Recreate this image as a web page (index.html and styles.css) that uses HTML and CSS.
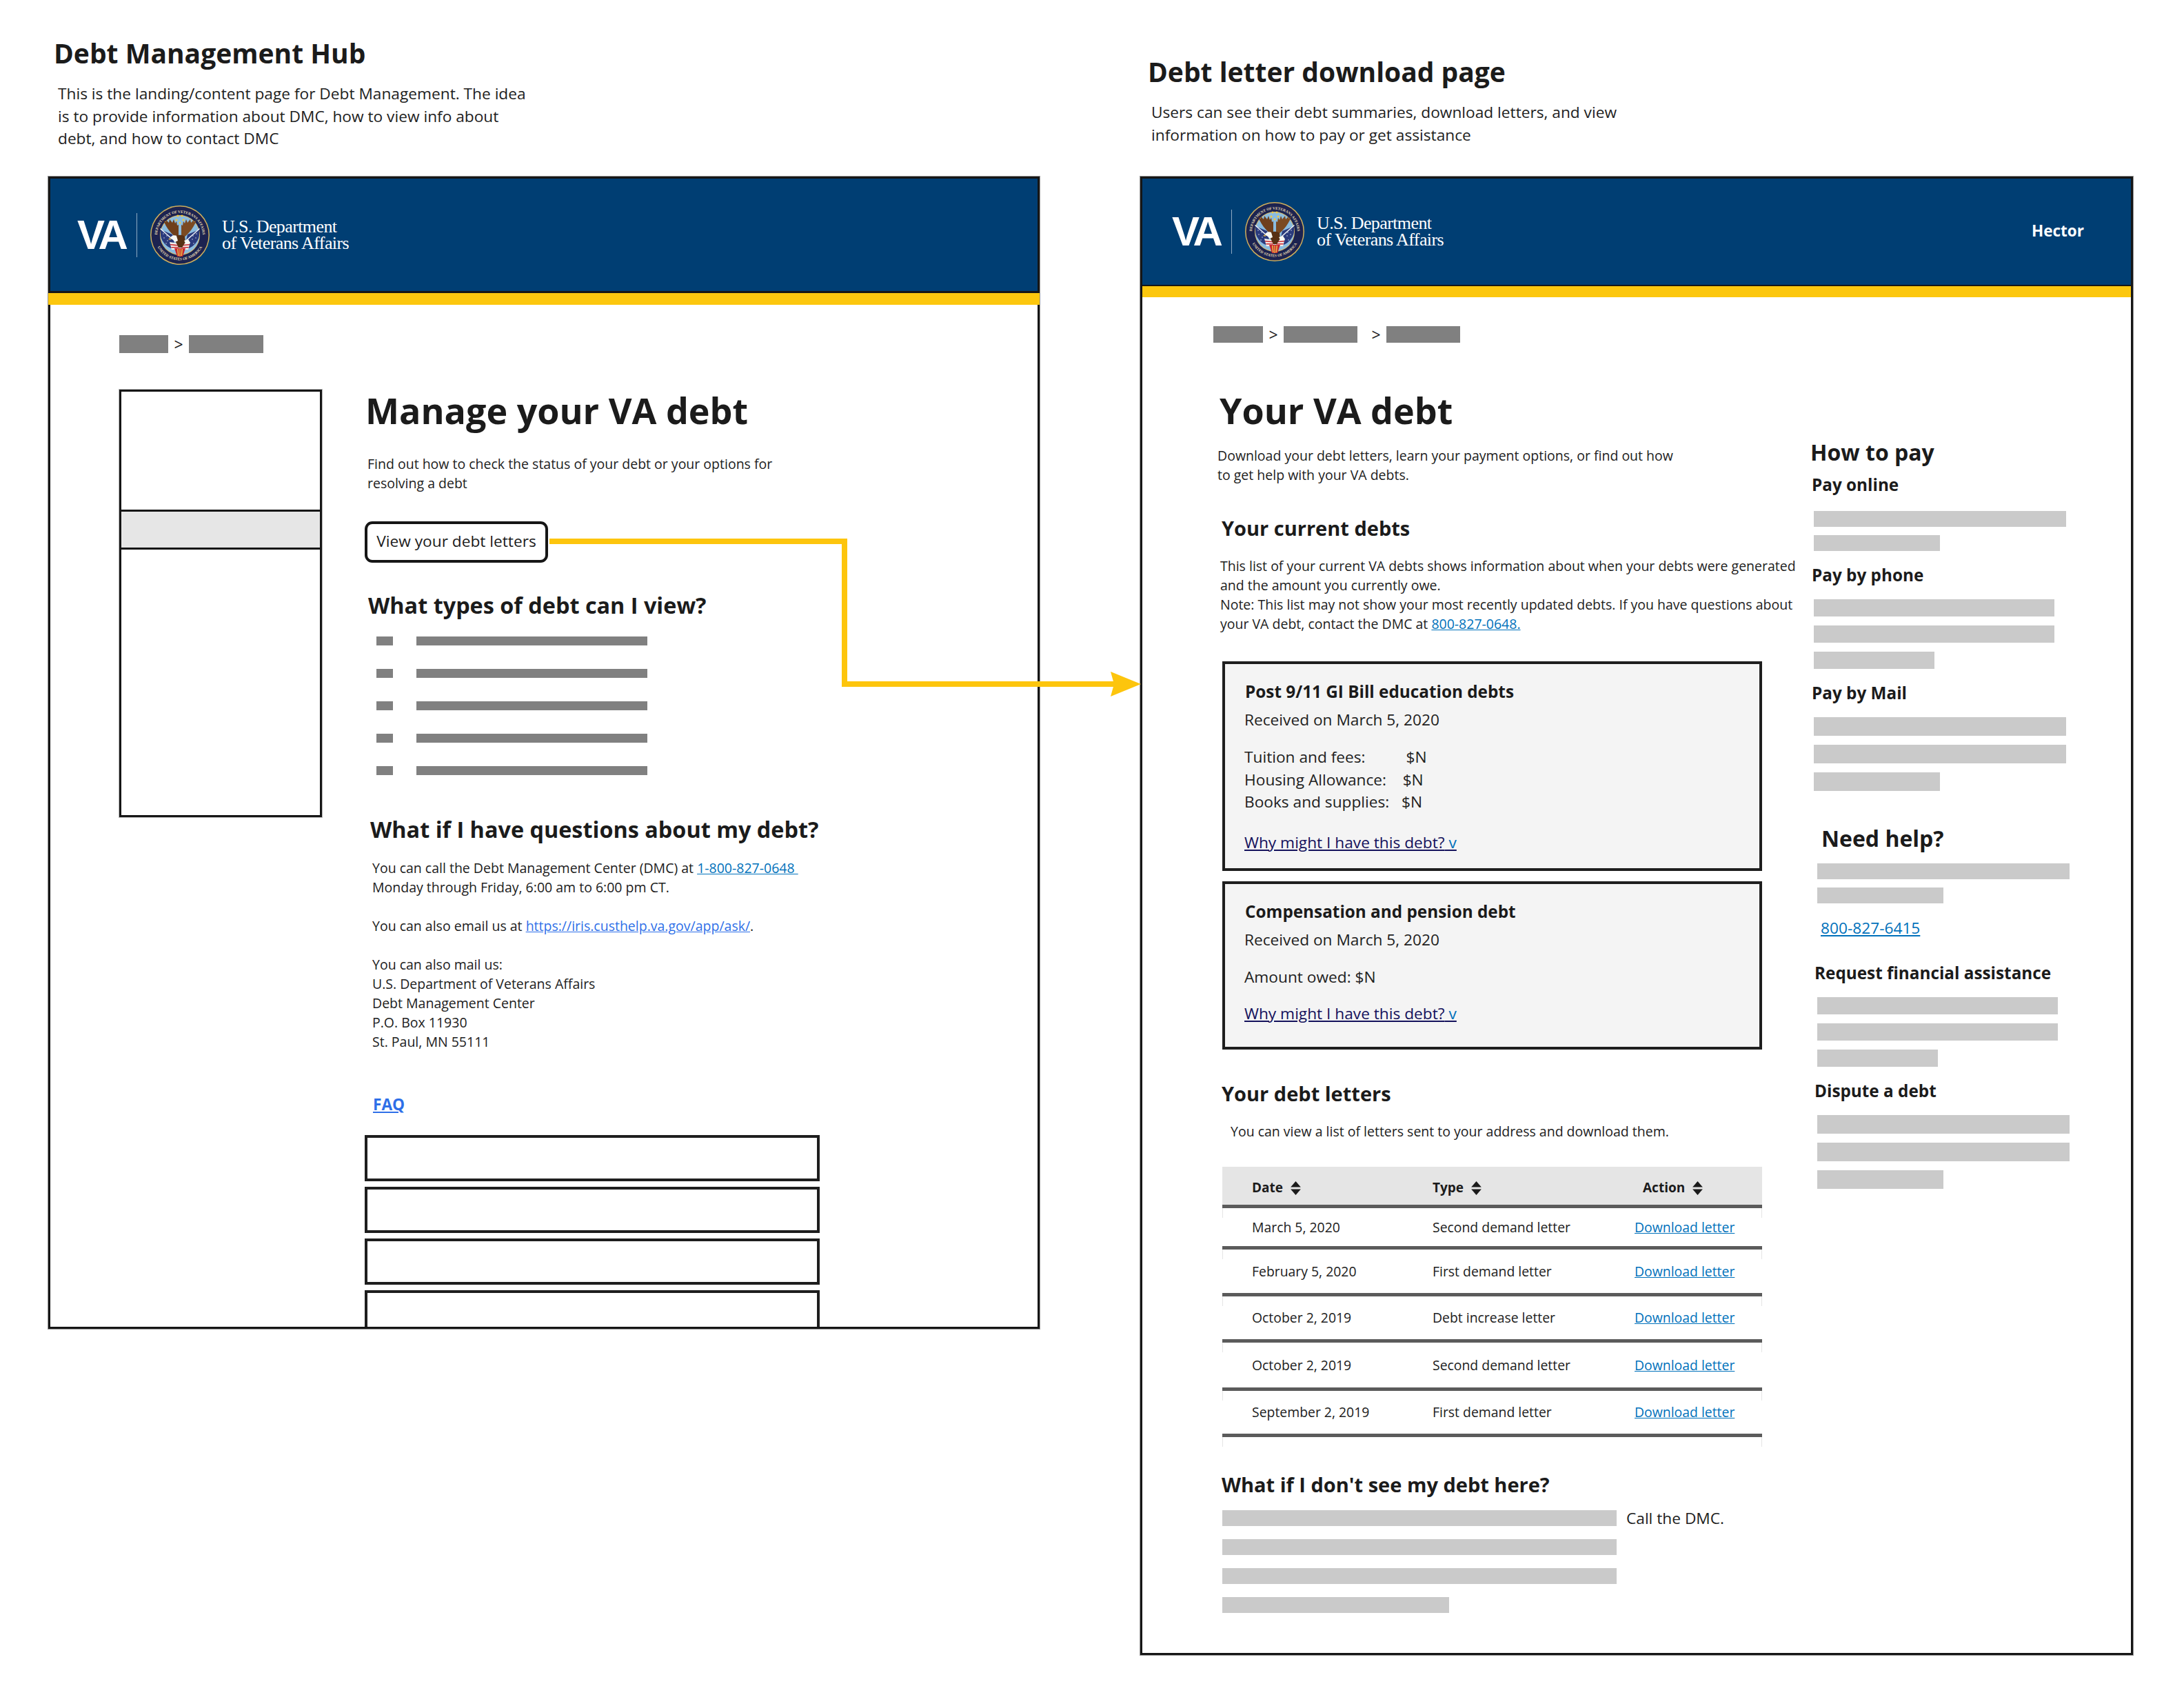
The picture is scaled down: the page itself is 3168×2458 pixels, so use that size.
FILE: index.html
```html
<!DOCTYPE html>
<html lang="en">

<head>
    <meta charset="UTF-8">
    <meta name="viewport" content="width=device-width, initial-scale=1.0">
    <title>Debt Management wireframes</title>
    <link rel="stylesheet" href="styles.css">
</head>

<body>
    <svg class="svg-defs" width="0" height="0" aria-hidden="true">
        <symbol id="sort-arrows" viewBox="0 0 14 19">
            <path d="M7 0l7 8H0zM7 19L0 11h14z"/>
        </symbol>
        <symbol id="seal-art" viewBox="0 0 86 86">
            <circle cx="43" cy="43" r="43" fill="#cfae5c"/>
            <circle cx="43" cy="43" r="41.5" fill="#1c2350"/>
            <circle cx="43" cy="43" r="29" fill="#d8bd72"/>
            <circle cx="43" cy="43" r="28" fill="#8abce0"/>
            <path d="M15 35l17 7 4 18-6 2c-7-3-13-9-15-18z" fill="#2a3a7c"/>
            <path d="M71 35l-17 7-4 18 6 2c7-3 13-9 15-18z" fill="#2a3a7c"/>
            <path d="M71 33L52 50l1 1 19-17z" fill="#eef2f6"/>
            <path d="M15 33l17 15-1 1-17-15z" fill="#eef2f6"/>
            <g fill="#e6e8f2">
                <circle cx="19" cy="41" r=".7"/><circle cx="24" cy="44" r=".7"/><circle cx="20" cy="47" r=".7"/><circle cx="25" cy="51" r=".7"/><circle cx="23" cy="55" r=".7"/>
                <circle cx="67" cy="41" r=".7"/><circle cx="62" cy="44" r=".7"/><circle cx="66" cy="47" r=".7"/><circle cx="61" cy="49" r=".7"/><circle cx="63" cy="55" r=".7"/>
            </g>
            <path d="M28 53l13 2 2 9H31zM58 53l-13 2-2 9h12z" fill="#f3eeea"/>
            <path d="M29 56l11 1v1.600l-11-1zM30 60l11 0v1.600H31zM57 56l-11 1v1.600l11-1zM56 60H45v1.600h10z" fill="#c8262f"/>
            <path d="M35 62h16l-4 12h-8z" fill="#c8262f"/>
            <path d="M39 63h1.500l1 10h-1.500zM45.500 63H47l-1 10h-1.500zM42.400 63h1.200v11h-1.200z" fill="#e6c04c"/>
            <g fill="#f2c93e">
                <circle cx="40" cy="15" r="1.500"/><circle cx="46" cy="15" r="1.500"/><circle cx="38" cy="21" r="1.500"/><circle cx="48" cy="21" r="1.500"/><circle cx="43" cy="25" r="1.500"/>
            </g>
            <path d="M41 49C36 46 24 36 19 21l4 3 0-3 4 4 1-5 4 5 2-5 2 6 2-3 1 6 2-1 0 21z" fill="#6f3f1c"/>
            <path d="M45 49c5-3 17-13 22-28l-4 3 0-3-4 4-1-5-4 5-2-5-2 6-2-3-1 6-2-1 0 21z" fill="#7b4a22"/>
            <path d="M36 45c3-3 11-3 14 0l1 8-5 8h-5l-4-8z" fill="#573014"/>
            <path d="M29 47c1-3 6-5 9-3l2 7-4 2-3-3z" fill="#f8f8f4"/>
            <path d="M29 47l-3 2 4 1z" fill="#e6b93c"/>
            <path d="M49 51l6-2 3 5-6 2z" fill="#f8f8f4"/>
        </symbol>
    </svg>

    <div class="canvas">
        <section class="board board-hub">
            <div class="board-intro">
                <h2 class="board-title">Debt Management Hub</h2>
                <p class="board-note">This is the landing/content page for Debt Management. The idea<br>is to provide information about DMC, how to view info about<br>debt, and how to contact DMC</p>
            </div>

            <div class="frame">
                <header class="site-header">
                    <div class="va-logo">
                        <span class="va-mark">VA</span>
                        <span class="va-rule"></span>
                        <svg class="va-seal" viewBox="0 0 86 86">
                            <use href="#seal-art" width="86" height="86"/>
                            <path id="hub-seal-top" d="M12 55A33 33 0 1 1 74 55" fill="none"/>
                            <path id="hub-seal-bottom" d="M9 57A37 37 0 0 0 77 57" fill="none"/>
                            <text class="seal-text"><textPath href="#hub-seal-top" startOffset="50%" text-anchor="middle">DEPARTMENT OF VETERANS AFFAIRS</textPath></text>
                            <text class="seal-text"><textPath href="#hub-seal-bottom" startOffset="50%" text-anchor="middle">UNITED STATES OF AMERICA</textPath></text>
                        </svg>
                        <span class="va-name">U.S. Department<br>of Veterans Affairs</span>
                    </div>
                </header>
                <div class="gold-bar"></div>

                <div class="hub-body">
                    <nav class="crumbs">
                        <span class="crumb crumb-sm"></span>
                        <span class="crumb-sep">&gt;</span>
                        <span class="crumb crumb-md"></span>
                    </nav>

                    <div class="hub-columns">
                        <aside class="side-nav">
                            <div class="side-nav-top"></div>
                            <div class="side-nav-active"></div>
                        </aside>

                        <main class="hub-main">
                            <h1 class="page-title">Manage your VA debt</h1>
                            <p class="hub-lede">Find out how to check the status of your debt or your options for<br>resolving a debt</p>
                            <a class="cta-button">View your debt letters</a>

                            <h2 class="hub-heading hub-heading-types">What types of debt can I view?</h2>
                            <ul class="bar-list">
                                <li><span class="bar-dot"></span><span class="bar-line"></span></li>
                                <li><span class="bar-dot"></span><span class="bar-line"></span></li>
                                <li><span class="bar-dot"></span><span class="bar-line"></span></li>
                                <li><span class="bar-dot"></span><span class="bar-line"></span></li>
                                <li><span class="bar-dot"></span><span class="bar-line"></span></li>
                            </ul>

                            <h2 class="hub-heading hub-heading-questions">What if I have questions about my debt?</h2>
                            <p class="hub-contact">You can call the Debt Management Center (DMC) at <a class="link">1-800-827-0648&nbsp;</a><br>
                                Monday through Friday, 6:00 am to 6:00 pm CT.<br><br>
                                You can also email us at <a class="link-bright">https://iris.custhelp.va.gov/app/ask/</a>.<br><br>
                                You can also mail us:<br>
                                U.S. Department of Veterans Affairs<br>
                                Debt Management Center<br>
                                P.O. Box 11930<br>
                                St. Paul, MN 55111</p>

                            <a class="faq-link">FAQ</a>
                            <div class="faq-boxes">
                                <div class="faq-box"></div>
                                <div class="faq-box"></div>
                                <div class="faq-box"></div>
                                <div class="faq-box faq-box-cut"></div>
                            </div>
                        </main>
                    </div>
                </div>
            </div>
        </section>

        <section class="board board-letters">
            <div class="board-intro">
                <h2 class="board-title">Debt letter download page</h2>
                <p class="board-note">Users can see their debt summaries, download letters, and view<br>information on how to pay or get assistance</p>
            </div>

            <div class="frame">
                <header class="site-header">
                    <div class="va-logo">
                        <span class="va-mark">VA</span>
                        <span class="va-rule"></span>
                        <svg class="va-seal" viewBox="0 0 86 86">
                            <use href="#seal-art" width="86" height="86"/>
                            <path id="letters-seal-top" d="M12 55A33 33 0 1 1 74 55" fill="none"/>
                            <path id="letters-seal-bottom" d="M9 57A37 37 0 0 0 77 57" fill="none"/>
                            <text class="seal-text"><textPath href="#letters-seal-top" startOffset="50%" text-anchor="middle">DEPARTMENT OF VETERANS AFFAIRS</textPath></text>
                            <text class="seal-text"><textPath href="#letters-seal-bottom" startOffset="50%" text-anchor="middle">UNITED STATES OF AMERICA</textPath></text>
                        </svg>
                        <span class="va-name">U.S. Department<br>of Veterans Affairs</span>
                    </div>
                    <span class="user-name">Hector</span>
                </header>
                <div class="gold-bar"></div>

                <div class="letters-body">
                    <nav class="crumbs">
                        <span class="crumb crumb-xs"></span>
                        <span class="crumb-sep">&gt;</span>
                        <span class="crumb crumb-lg"></span>
                        <span class="crumb-sep crumb-sep-wide">&gt;</span>
                        <span class="crumb crumb-lg"></span>
                    </nav>

                    <div class="letters-columns">
                        <main class="letters-main">
                            <h1 class="page-title letters-title">Your VA debt</h1>
                            <p class="letters-lede">Download your debt letters, learn your payment options, or find out how<br>to get help with your VA debts.</p>

                            <h2 class="letters-heading letters-heading-current">Your current debts</h2>
                            <p class="letters-copy">This list of your current VA debts shows information about when your debts were generated<br>
                                and the amount you currently owe.<br>
                                Note: This list may not show your most recently updated debts. If you have questions about<br>
                                your VA debt, contact the DMC at <a class="link">800-827-0648.</a></p>

                            <article class="debt-card debt-card-gi">
                                <h3 class="debt-name">Post 9/11 GI Bill education debts</h3>
                                <p class="debt-date">Received on March 5, 2020</p>
                                <p class="debt-amounts">Tuition and fees:          $N
Housing Allowance:    $N
Books and supplies:   $N</p>
                                <a class="debt-why">Why might I have this debt?<span class="debt-why-caret"> v</span></a>
                            </article>

                            <article class="debt-card debt-card-comp">
                                <h3 class="debt-name">Compensation and pension debt</h3>
                                <p class="debt-date">Received on March 5, 2020</p>
                                <p class="debt-amounts">Amount owed: $N</p>
                                <a class="debt-why">Why might I have this debt?<span class="debt-why-caret"> v</span></a>
                            </article>

                            <h2 class="letters-heading letters-heading-list">Your debt letters</h2>
                            <p class="letters-copy letters-copy-list">You can view a list of letters sent to your address and download them.</p>

                            <table class="letter-table">
                                <thead>
                                    <tr>
                                        <th>Date<svg class="sort-icon"><use href="#sort-arrows"/></svg></th>
                                        <th>Type<svg class="sort-icon"><use href="#sort-arrows"/></svg></th>
                                        <th><span class="action-head">Action<svg class="sort-icon"><use href="#sort-arrows"/></svg></span></th>
                                    </tr>
                                </thead>
                                <tbody>
                                    <tr>
                                        <td>March 5, 2020</td>
                                        <td>Second demand letter</td>
                                        <td><a class="link">Download letter</a></td>
                                    </tr>
                                    <tr>
                                        <td>February 5, 2020</td>
                                        <td>First demand letter</td>
                                        <td><a class="link">Download letter</a></td>
                                    </tr>
                                    <tr>
                                        <td>October 2, 2019</td>
                                        <td>Debt increase letter</td>
                                        <td><a class="link">Download letter</a></td>
                                    </tr>
                                    <tr>
                                        <td>October 2, 2019</td>
                                        <td>Second demand letter</td>
                                        <td><a class="link">Download letter</a></td>
                                    </tr>
                                    <tr>
                                        <td>September 2, 2019</td>
                                        <td>First demand letter</td>
                                        <td><a class="link">Download letter</a></td>
                                    </tr>
                                </tbody>
                            </table>
                            <div class="table-tail"></div>

                            <h2 class="letters-heading letters-heading-missing">What if I don't see my debt here?</h2>
                            <div class="missing-block">
                                <div class="missing-bars">
                                    <span class="ph-bar"></span>
                                    <span class="ph-bar"></span>
                                    <span class="ph-bar"></span>
                                    <span class="ph-bar ph-bar-end"></span>
                                </div>
                                <span class="missing-call">Call the DMC.</span>
                            </div>
                        </main>

                        <aside class="letters-side">
                            <h2 class="side-heading side-heading-pay">How to pay</h2>

                            <h3 class="side-label side-label-first">Pay online</h3>
                            <div class="side-bars side-bars-sm">
                                <span class="ph-bar ph-full"></span>
                                <span class="ph-bar ph-half"></span>
                            </div>

                            <h3 class="side-label">Pay by phone</h3>
                            <div class="side-bars">
                                <span class="ph-bar ph-wide"></span>
                                <span class="ph-bar ph-wide"></span>
                                <span class="ph-bar ph-short"></span>
                            </div>

                            <h3 class="side-label">Pay by Mail</h3>
                            <div class="side-bars side-bars-lg">
                                <span class="ph-bar ph-full"></span>
                                <span class="ph-bar ph-full"></span>
                                <span class="ph-bar ph-half"></span>
                            </div>

                            <div class="side-help">
                                <h2 class="side-heading side-heading-help">Need help?</h2>
                                <div class="side-bars side-bars-sm side-bars-help">
                                    <span class="ph-bar ph-full"></span>
                                    <span class="ph-bar ph-half"></span>
                                </div>
                                <a class="link side-phone">800-827-6415</a>

                                <h3 class="side-label side-label-request">Request financial assistance</h3>
                                <div class="side-bars">
                                    <span class="ph-bar ph-wide"></span>
                                    <span class="ph-bar ph-wide"></span>
                                    <span class="ph-bar ph-short"></span>
                                </div>

                                <h3 class="side-label">Dispute a debt</h3>
                                <div class="side-bars side-bars-lg">
                                    <span class="ph-bar ph-full"></span>
                                    <span class="ph-bar ph-full"></span>
                                    <span class="ph-bar ph-half"></span>
                                </div>
                            </div>
                        </aside>
                    </div>
                </div>
            </div>
        </section>

        <!-- arrow from the hub button over to the letters page -->
        <svg class="flow-arrow" viewBox="0 0 3168 2458">
            <path d="M797 785H1225V992H1620" fill="none" stroke="#fdc50d" stroke-width="8"/>
            <path d="M1655 992l-44-18 5 18-5 18z" fill="#fdc50d"/>
        </svg>
    </div>
</body>

</html>
```

FILE: styles.css
```css
* {
    box-sizing: border-box;
}

body {
    margin: 0;
    padding: 0;
    background-color: #fff;
    color: #212121;
    font-family: "Open Sans", Arial, sans-serif;
    font-size: 19.5px;
    line-height: 28px;
}

h1, h2, h3, p, ul {
    margin: 0;
    padding: 0;
}

.svg-defs {
    display: block;
}

.canvas {
    position: relative;
    display: flex;
    width: 3168px;
    height: 2458px;
    padding-left: 70px;
    overflow: hidden;
}

.flow-arrow {
    position: absolute;
    top: 0;
    left: 0;
    width: 3168px;
    height: 2458px;
    pointer-events: none;
}

/* boards */
.board-hub {
    width: 1438px;
}

.board-letters {
    width: 1440px;
    margin-left: 146px;
}

.board-intro {
    height: 256px;
}

.board-title {
    font-size: 39px;
    line-height: 50px;
    font-weight: 700;
    color: #1b1b1b;
    white-space: nowrap;
}

.board-note {
    margin-top: 18px;
    font-size: 22.7px;
    line-height: 32.5px;
    white-space: nowrap;
}

.board-hub .board-intro {
    padding: 52px 0 0 8px;
}

.board-hub .board-note {
    margin-left: 6px;
}

.board-letters .board-intro {
    padding: 79px 0 0 11px;
}

.board-letters .board-note {
    margin-left: 5px;
}

.frame {
    border: 3px solid #161616;
    box-shadow: 0 0 0 1px rgba(22, 22, 22, .45);
}

.board-hub .frame {
    height: 1671px;
}

.board-letters .frame {
    height: 2144px;
}

/* va.gov header */
.site-header {
    display: flex;
    align-items: center;
    justify-content: space-between;
    background-color: #003e73;
    border-bottom: 3px solid #161616;
}

.board-hub .site-header {
    height: 166px;
    padding-left: 39px;
}

.board-letters .site-header {
    height: 156px;
    padding: 0 68px 0 43px;
    border-bottom-width: 2px;
}

.gold-bar {
    background-color: #fcc70e;
}

.board-hub .gold-bar {
    height: 17px;
    margin: 0 -3px;
}

.board-letters .gold-bar {
    height: 16px;
}

.va-logo {
    display: flex;
    align-items: center;
    color: #fff;
}

.va-mark {
    width: 70px;
    font-family: "Liberation Sans", Arial, sans-serif;
    font-size: 60px;
    line-height: 60px;
    font-weight: 700;
    letter-spacing: -5px;
}

.va-rule {
    width: 1px;
    height: 64px;
    margin: 0 19px 0 16px;
    background-color: #8fa9c2;
}

.va-seal {
    width: 86px;
    height: 86px;
}

.seal-text {
    font-family: "Liberation Serif", serif;
    font-size: 5.4px;
    font-weight: 700;
    fill: #e6dcb4;
}

.va-name {
    margin-left: 18px;
    font-family: "Liberation Serif", serif;
    font-size: 26px;
    line-height: 24px;
    letter-spacing: -.6px;
    white-space: nowrap;
}

.user-name {
    margin-top: -2px;
    font-size: 22.5px;
    font-weight: 700;
    color: #fff;
}

/* breadcrumbs */
.crumbs {
    display: flex;
    align-items: center;
}

.crumb {
    background-color: #808080;
}

.crumb-sm {
    width: 71px;
}

.crumb-md {
    width: 108px;
}

.crumb-xs {
    width: 72px;
}

.crumb-lg {
    width: 107px;
}

.crumb-sep {
    width: 30px;
    font-size: 23px;
    text-align: center;
}

.crumb-sep-wide {
    width: 42px;
    padding-left: 12px;
}

.hub-body .crumbs {
    height: 26px;
}

.hub-body .crumb {
    height: 26px;
}

.letters-body .crumbs {
    height: 24px;
}

.letters-body .crumb {
    height: 24px;
}

/* hub page */
.hub-body {
    padding: 44px 0 0 100px;
}

.hub-columns {
    display: flex;
    gap: 63px;
    margin-top: 53px;
}

.side-nav {
    width: 294px;
    height: 620px;
    border: 3px solid #161616;
    box-shadow: 0 0 0 1px rgba(22, 22, 22, .3);
}

.side-nav-top {
    height: 171px;
}

.side-nav-active {
    height: 58px;
    background-color: #e6e6e6;
    border-top: 3px solid #161616;
    border-bottom: 3px solid #161616;
}

.hub-main {
    width: 660px;
}

.page-title {
    font-size: 52px;
    line-height: 60px;
    font-weight: 700;
    color: #1b1b1b;
    white-space: nowrap;
}

.hub-lede {
    margin: 34px 0 0 3px;
    white-space: nowrap;
}

.cta-button {
    display: flex;
    align-items: center;
    justify-content: center;
    width: 266px;
    height: 60px;
    margin: 41px 0 0 -1px;
    padding-bottom: 2px;
    font-size: 22.7px;
    color: #1b1b1b;
    border: 4px solid #161616;
    border-radius: 11px;
}

.hub-heading {
    font-size: 32.4px;
    line-height: 44px;
    font-weight: 700;
    color: #1b1b1b;
    white-space: nowrap;
}

.hub-heading-types {
    margin: 39px 0 0 4px;
}

.hub-heading-questions {
    margin: 56px 0 0 7px;
}

.bar-list {
    display: flex;
    flex-direction: column;
    gap: 34px;
    margin: 24px 0 0 16px;
    list-style: none;
}

.bar-list li {
    display: flex;
    gap: 34px;
}

.bar-dot,
.bar-line {
    height: 13px;
    background-color: #808080;
}

.bar-dot {
    width: 24px;
}

.bar-line {
    width: 335px;
}

.hub-contact {
    margin: 21px 0 0 10px;
    white-space: nowrap;
}

.link {
    color: #0071bb;
    text-decoration: underline;
}

.link-bright {
    color: #2e6fe8;
    text-decoration: underline;
}

.faq-link {
    display: block;
    margin: 62px 0 0 11px;
    font-size: 22.7px;
    line-height: 30px;
    font-weight: 700;
    color: #2e6fe8;
    text-decoration: underline;
}

.faq-boxes {
    display: flex;
    flex-direction: column;
    gap: 8px;
    margin: 29px 0 0 -1px;
}

.faq-box {
    width: 660px;
    height: 67px;
    border: 4px solid #1e1e1e;
}

.faq-box-cut {
    height: 53px;
    border-bottom: 0;
}

/* letters page */
.letters-body {
    padding: 42px 0 0 103px;
}

.letters-columns {
    display: flex;
}

.letters-main {
    width: 868px;
    padding-left: 6px;
    margin-top: 68px;
}

.letters-title {
    margin-left: 3px;
}

.letters-lede {
    margin-top: 22px;
    white-space: nowrap;
}

.letters-heading {
    margin-left: 6px;
    font-size: 29px;
    line-height: 40px;
    font-weight: 700;
    color: #1b1b1b;
    white-space: nowrap;
}

.letters-heading-current {
    margin-top: 43px;
}

.letters-heading-list {
    margin-top: 44px;
}

.letters-heading-missing {
    margin-top: 33px;
    line-height: 44px;
}

.letters-copy {
    margin: 21px 0 0 4px;
    white-space: nowrap;
}

.letters-copy-list {
    margin-left: 19px;
}

.debt-card {
    width: 783px;
    margin-left: 7px;
    padding: 24px 28px 0;
    background-color: #f4f4f4;
    border: 4px solid #1e1e1e;
    font-size: 22.7px;
    line-height: 32px;
}

.debt-card-gi {
    height: 304px;
    margin-top: 40px;
}

.debt-card-comp {
    height: 244px;
    margin-top: 15px;
}

.debt-name {
    margin-left: 1px;
    font-size: 24.3px;
    font-weight: 700;
    color: #1b1b1b;
}

.debt-date {
    margin-top: 9px;
}

.debt-amounts {
    margin-top: 22px;
    line-height: 32.5px;
    white-space: pre;
}

.debt-why {
    display: block;
    margin-top: 26px;
    color: #14125c;
    text-decoration: underline;
}

.debt-card-comp .debt-why {
    margin-top: 20px;
}

.debt-why-caret {
    color: #0071bb;
}

.letter-table {
    width: 783px;
    margin: 37px 0 0 7px;
    border-spacing: 0;
    table-layout: fixed;
    font-size: 19.4px;
}

.letter-table th,
.letter-table td {
    padding: 0;
    text-align: left;
    vertical-align: middle;
    border-bottom: 5px solid #5b5b5b;
}

.letter-table th {
    height: 60px;
    padding-top: 4px;
    background-color: #e5e5e5;
    font-size: 19px;
    font-weight: 700;
    color: #1b1b1b;
}

.letter-table th:first-child,
.letter-table td:first-child {
    width: 305px;
    padding-left: 43px;
}

.letter-table th:nth-child(2),
.letter-table td:nth-child(2) {
    width: 293px;
}

.letter-table td {
    white-space: nowrap;
}

.letter-table td:first-child {
    background: linear-gradient(#e5e5e5, #e5e5e5) left top / 1px 14px no-repeat;
}

.letter-table td:last-child {
    background: linear-gradient(#e5e5e5, #e5e5e5) right top / 1px 14px no-repeat;
}

.letter-table tr:nth-child(1) td {
    height: 60px;
}

.letter-table tr:nth-child(2) td {
    height: 68px;
}

.letter-table tr:nth-child(3) td {
    height: 67px;
}

.letter-table tr:nth-child(4) td {
    height: 70px;
}

.letter-table tr:nth-child(5) td {
    height: 67px;
}

.action-head {
    margin-left: 12px;
}

.sort-icon {
    width: 15px;
    height: 20px;
    margin-left: 11px;
    vertical-align: -4px;
    fill: #1b1b1b;
}

.table-tail {
    width: 783px;
    height: 14px;
    margin-left: 7px;
    border-left: 1px solid #e5e5e5;
    border-right: 1px solid #e5e5e5;
}

.missing-block {
    display: flex;
    gap: 14px;
    margin: 15px 0 0 7px;
}

.missing-bars {
    display: flex;
    flex-direction: column;
    gap: 19px;
}

.ph-bar {
    display: block;
    width: 572px;
    height: 23px;
    background-color: #cacaca;
}

.ph-bar-end {
    width: 329px;
}

.missing-call {
    font-size: 22.7px;
    line-height: 24px;
}

/* letters sidebar */
.letters-side {
    width: 390px;
    margin-top: 139px;
}

.side-heading {
    font-size: 32px;
    line-height: 40px;
    font-weight: 700;
    color: #1b1b1b;
}

.side-heading-pay {
    margin-left: -2px;
}

.side-label {
    margin-top: 20px;
    font-size: 24.3px;
    line-height: 30px;
    font-weight: 700;
    color: #1b1b1b;
    white-space: nowrap;
}

.side-label-first {
    margin-top: 12px;
}

.side-bars {
    display: flex;
    flex-direction: column;
    gap: 13px;
    margin: 20px 0 0 3px;
}

.side-bars .ph-bar {
    height: 25px;
}

.side-bars-sm {
    gap: 12px;
    margin-top: 23px;
}

.side-bars-sm .ph-bar {
    height: 23px;
}

.side-bars-lg {
    margin-top: 20px;
}

.side-bars-lg .ph-bar {
    height: 27px;
}

.ph-bar.ph-full {
    width: 366px;
}

.ph-bar.ph-wide {
    width: 349px;
}

.ph-bar.ph-half {
    width: 183px;
}

.ph-bar.ph-short {
    width: 175px;
}

.side-help {
    margin: 49px 0 0 4px;
}

.side-heading-help {
    margin-left: 10px;
}

.side-bars-help {
    margin-top: 16px;
    margin-left: 4px;
}

.side-help .side-bars {
    margin-left: 4px;
}

.side-phone {
    display: block;
    margin: 21px 0 0 9px;
    font-size: 22.7px;
    line-height: 30px;
}

.side-label-request {
    margin-top: 35px;
}
```
